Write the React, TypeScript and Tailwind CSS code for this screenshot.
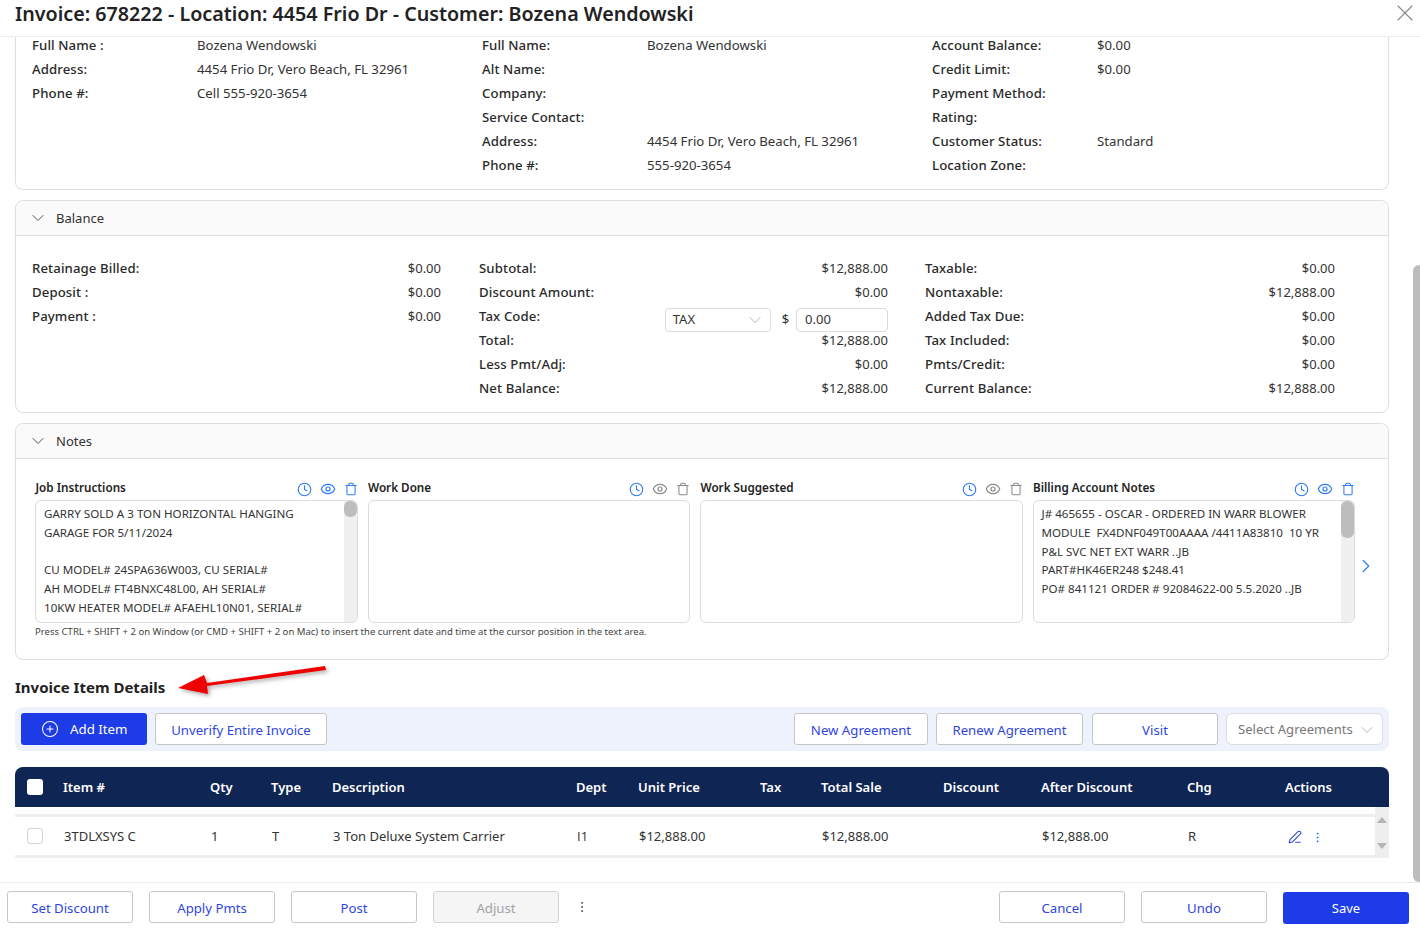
import { ChevronDown, ChevronRight, CirclePlus, Clock, EllipsisVertical, Eye, PenLine, Trash, X } from "lucide-react";

const font = "font-['Noto_Sans',sans-serif]";

const customerRows = [
  [["Full Name :", "Bozena Wendowski"], ["Address:", "4454 Frio Dr, Vero Beach, FL 32961"], ["Phone #:", "Cell 555-920-3654"]],
  [["Full Name:", "Bozena Wendowski"], ["Alt Name:", ""], ["Company:", ""], ["Service Contact:", ""], ["Address:", "4454 Frio Dr, Vero Beach, FL 32961"], ["Phone #:", "555-920-3654"]],
  [["Account Balance:", "$0.00"], ["Credit Limit:", "$0.00"], ["Payment Method:", ""], ["Rating:", ""], ["Customer Status:", "Standard"], ["Location Zone:", ""]],
];

const balanceLeft = [["Retainage Billed:", "$0.00"], ["Deposit :", "$0.00"], ["Payment :", "$0.00"]];
const balanceMid = [["Subtotal:", "$12,888.00"], ["Discount Amount:", "$0.00"]];
const balanceMidEnd = [["Total:", "$12,888.00"], ["Less Pmt/Adj:", "$0.00"], ["Net Balance:", "$12,888.00"]];
const balanceRight = [["Taxable:", "$0.00"], ["Nontaxable:", "$12,888.00"], ["Added Tax Due:", "$0.00"], ["Tax Included:", "$0.00"], ["Pmts/Credit:", "$0.00"], ["Current Balance:", "$12,888.00"]];

const notes = [
  { title: "Job Instructions", active: true, lines: ["GARRY SOLD A 3 TON HORIZONTAL HANGING", "GARAGE FOR 5/11/2024", "\u00a0", "CU MODEL# 24SPA636W003, CU SERIAL#", "AH MODEL# FT4BNXC48L00, AH SERIAL#", "10KW HEATER MODEL# AFAEHL10N01, SERIAL#"], thumb: "h-[16px]" },
  { title: "Work Done", active: false, lines: [], thumb: "" },
  { title: "Work Suggested", active: false, lines: [], thumb: "" },
  { title: "Billing Account Notes", active: true, lines: ["J# 465655 - OSCAR - ORDERED IN WARR BLOWER", "MODULE  FX4DNF049T00AAAA /4411A83810  10 YR", "P&L SVC NET EXT WARR ..JB", "PART#HK46ER248 $248.41", "PO# 841121 ORDER # 92084622-00 5.5.2020 ..JB"], thumb: "h-[37px]" },
];

const columns = ["Item #", "Qty", "Type", "Description", "Dept", "Unit Price", "Tax", "Total Sale", "Discount", "After Discount", "Chg", "Actions"];
const rowCells = ["3TDLXSYS C", "1", "T", "3 Ton Deluxe System Carrier", "I1", "$12,888.00", "", "$12,888.00", "", "$12,888.00", "R"];
const gridCols = "grid-cols-[147px_61px_61px_244px_62px_122px_61px_122px_98px_146px_98px_1fr]";

const Field = ({ label, value }: { label: string; value: string }) => (
  <div className="flex h-6 items-center pt-[2px] first:h-5 first:items-end first:pb-px">
    <span className="w-[165px] text-[13.2px] font-medium tracking-[0.1px] text-[#2a2a2a]">{label}</span>
    <span className="text-[13.2px] text-[#333]">{value}</span>
  </div>
);

const Amount = ({ label, value }: { label: string; value: string }) => (
  <div className="flex h-6 items-center justify-between pt-[2px]">
    <span className="text-[13.2px] font-medium tracking-[0.1px] text-[#2a2a2a]">{label}</span>
    <span className="text-[13px] text-[#333]">{value}</span>
  </div>
);

const OutlineButton = ({ label, width, className = "" }: { label: string; width: string; className?: string }) => (
  <button className={`h-8 rounded-[3px] border border-[#c6c6c6] bg-white pt-[3px] text-[13.2px] text-[#2f45e3] ${width} ${className}`}>{label}</button>
);

const CardHeader = ({ title }: { title: string }) => (
  <div className="flex h-[35px] items-center rounded-t-lg border-b border-[#dedede] bg-[#fafafa] pl-3">
    <ChevronDown size={20} strokeWidth={1.1} className="text-[#444]" />
    <span className="ml-2 pt-[2px] text-[13px] text-[#333]">{title}</span>
  </div>
);

const NoteBox = ({ note }: { note: (typeof notes)[number] }) => {
  const tone = note.active ? "text-[#2f7bf0]" : "text-[#8a8a8a]";
  return (
    <div className="min-w-0">
      <div className="flex h-6 items-center justify-between">
        <span className="pl-[0.5px] text-[11.7px] font-semibold text-[#222]">{note.title}</span>
        <div className="mt-[2px] flex items-center gap-2">
          <Clock size={15} strokeWidth={1.8} className="text-[#2f7bf0]" />
          <Eye size={16} strokeWidth={1.8} className={tone} />
          <Trash size={14} strokeWidth={1.8} className={tone} />
        </div>
      </div>
      <div className="flex h-[123px] overflow-hidden rounded-md border border-[#dcdcdc]">
        <div className="flex-1 overflow-hidden whitespace-pre pl-2 pt-1 text-[11.6px] leading-[18.8px] text-[#333]">
          {note.lines.map((line, i) => (
            <div key={i}>{line}</div>
          ))}
        </div>
        {note.lines.length > 0 && (
          <div className="w-[13px] bg-[#f0f0f0]">
            <div className={`rounded-md bg-[#bdbdbd] ${note.thumb}`} />
          </div>
        )}
      </div>
    </div>
  );
};

export default function App() {
  return (
    <div className={`relative flex h-[939px] w-[1420px] flex-col overflow-hidden bg-white ${font}`}>
      <header className="relative z-10 flex h-[37px] shrink-0 items-center justify-between border-b border-[#ececec] bg-white pl-[15px] pr-px">
        <h1 className="pb-2 text-[19.7px] font-semibold text-[#222]">Invoice: 678222 - Location: 4454 Frio Dr - Customer: Bozena Wendowski</h1>
        <X size={28} strokeWidth={1} className="mb-[10px] text-[#888]" />
      </header>

      <main className="ml-[15px] w-[1374px] flex-1 overflow-hidden">
        <section className="grid grid-cols-[450px_450px_1fr] rounded-b-lg border-x border-b border-[#dedede] pb-3 pl-4">
          {customerRows.map((col, i) => (
            <div key={i}>
              {col.map(([label, value]) => (
                <Field key={label} label={label} value={value} />
              ))}
            </div>
          ))}
        </section>

        <section className="mt-[10px] rounded-lg border border-[#dedede]">
          <CardHeader title="Balance" />
          <div className="grid grid-cols-[409px_409px_409px] gap-x-[38px] pb-3 pl-4 pt-5">
            <div>
              {balanceLeft.map(([label, value]) => (
                <Amount key={label} label={label} value={value} />
              ))}
            </div>
            <div>
              {balanceMid.map(([label, value]) => (
                <Amount key={label} label={label} value={value} />
              ))}
              <div className="flex h-6 items-center">
                <span className="w-[186px] pt-[2px] text-[13.2px] font-medium tracking-[0.1px] text-[#2a2a2a]">Tax Code:</span>
                <div className="mt-2 flex h-6 w-[106px] items-center justify-between rounded-[4px] border border-[#dcdcdc] pl-[7px] pr-[5px] text-[13px] text-[#333]">
                  TAX
                  <ChevronDown size={20} strokeWidth={1} className="text-[#aaa]" />
                </div>
                <span className="ml-[11px] mt-2 text-[13px] text-[#333]">$</span>
                <div className="ml-[7px] mt-2 flex h-6 w-[92px] items-center rounded-[4px] border border-[#dcdcdc] px-2 text-[13px] text-[#333]">0.00</div>
              </div>
              {balanceMidEnd.map(([label, value]) => (
                <Amount key={label} label={label} value={value} />
              ))}
            </div>
            <div className="-ml-px">
              {balanceRight.map(([label, value]) => (
                <Amount key={label} label={label} value={value} />
              ))}
            </div>
          </div>
        </section>

        <section className="mt-[10px] rounded-lg border border-[#dedede]">
          <CardHeader title="Notes" />
          <div className="pl-[19px] pt-[17px]">
            <div className="flex">
              <div className="grid w-[1320px] grid-cols-4 gap-x-[10px]">
                {notes.map((note) => (
                  <NoteBox key={note.title} note={note} />
                ))}
              </div>
              <ChevronRight size={22} strokeWidth={1.3} className="mt-[79px] text-[#2f7bf0]" />
            </div>
            <p className="mt-[3px] h-[33px] text-[9.55px] leading-3 text-[#444]">Press CTRL + SHIFT + 2 on Window (or CMD + SHIFT + 2 on Mac) to insert the current date and time at the cursor position in the text area.</p>
          </div>
        </section>

        <h2 className="mt-[17px] h-[20px] text-[15px] font-bold leading-5 text-[#222]">Invoice Item Details</h2>

        <div className="mt-[10px] flex h-[44px] items-center rounded-lg bg-[#eef2fd] px-[6px]">
          <button className="flex h-8 w-[126px] items-center rounded-[3px] bg-[#1d3ce8] pl-[20px] text-[13.3px] text-white">
            <CirclePlus size={18} strokeWidth={1.4} />
            <span className="ml-[11px] pt-px">Add Item</span>
          </button>
          <OutlineButton label="Unverify Entire Invoice" width="w-[172px]" className="ml-2" />
          <OutlineButton label="New Agreement" width="w-[134px]" className="ml-auto" />
          <OutlineButton label="Renew Agreement" width="w-[147px]" className="ml-2" />
          <OutlineButton label="Visit" width="w-[126px]" className="ml-[9px]" />
          <div className="ml-2 flex h-8 w-[157px] items-center justify-between rounded-md border border-[#dcdcdc] bg-white pl-[11px] pr-[5px] pt-[2px] text-[13.1px] text-[#777]">
            Select Agreements
            <ChevronDown size={20} strokeWidth={1} className="text-[#aaa]" />
          </div>
        </div>

        <div className="mt-4 flex h-[40px] items-center rounded-t-lg bg-[#0f2554] pl-3">
          <span className="h-4 w-4 rounded-[3px] bg-white" />
          <div className={`ml-5 grid flex-1 pt-[2px] ${gridCols} text-[13px] font-semibold text-white`}>
            {columns.map((c) => (
              <span key={c}>{c}</span>
            ))}
          </div>
        </div>
        <div className="flex">
          <div className="w-[1360px]">
            <div className="mt-[7px] h-[3px] bg-[#eeeeee]" />
            <div className="flex h-[38px] items-center pl-3">
              <span className="h-4 w-4 rounded-[3px] border border-[#d4d4d4]" />
              <div className={`ml-[21px] grid flex-1 pt-[2px] ${gridCols} items-center text-[13px] text-[#333]`}>
                {rowCells.map((c, i) => (
                  <span key={i} className={c === "I1" ? "font-['Open_Sans',sans-serif]" : ""}>{c}</span>
                ))}
                <span className="flex items-center pl-[2px] text-[#2f45e3]">
                  <PenLine size={14} strokeWidth={1.8} />
                  <EllipsisVertical size={13} strokeWidth={1.8} className="ml-[9px] text-[#2f7bf0]" />
                </span>
              </div>
            </div>
            <div className="h-[3px] bg-[#eeeeee]" />
          </div>
          <div className="flex h-[51px] w-[14px] flex-col items-center justify-between bg-[#eeeeee] pb-[9px] pt-[10px]">
            <svg width="10" height="6" viewBox="0 0 10 6">
              <polygon points="5,0 10,6 0,6" fill="#b5b5b5" />
            </svg>
            <svg width="10" height="6" viewBox="0 0 10 6">
              <polygon points="0,0 10,0 5,6" fill="#b5b5b5" />
            </svg>
          </div>
        </div>
      </main>

      <footer className="flex h-[57px] shrink-0 items-start border-t border-[#ececec] pl-[7px] pr-[11px] pt-2">
        <OutlineButton label="Set Discount" width="w-[126px]" />
        <OutlineButton label="Apply Pmts" width="w-[126px]" className="ml-4" />
        <OutlineButton label="Post" width="w-[126px]" className="ml-4" />
        <button className="ml-4 h-8 w-[126px] rounded-[3px] border border-[#d4d4d4] bg-[#f5f5f5] pt-[3px] text-[13.2px] text-[#a3a3a3]">Adjust</button>
        <EllipsisVertical size={14} strokeWidth={1.6} className="ml-4 mt-[9px] text-[#555]" />
        <OutlineButton label="Cancel" width="w-[126px]" className="ml-auto" />
        <OutlineButton label="Undo" width="w-[126px]" className="ml-4" />
        <button className="ml-4 mt-px h-8 w-[126px] rounded-[3px] bg-[#1d3ce8] pt-[2px] text-[13px] text-white">Save</button>
      </footer>

      {/* page scrollbar */}
      <div className="absolute left-[1413px] top-[265px] h-[617px] w-[7px] rounded-l-md bg-[#bdbdbd]" />

      {/* annotation arrow */}
      <svg className="absolute left-[170px] top-[660px] drop-shadow-[2px_2px_2px_rgba(0,0,0,0.35)]" width="170" height="40" viewBox="170 660 170 40">
        <polygon points="178,688 204,675 207,683 325,666 326,670 207,686 208,694" fill="#f00000" />
      </svg>
    </div>
  );
}
